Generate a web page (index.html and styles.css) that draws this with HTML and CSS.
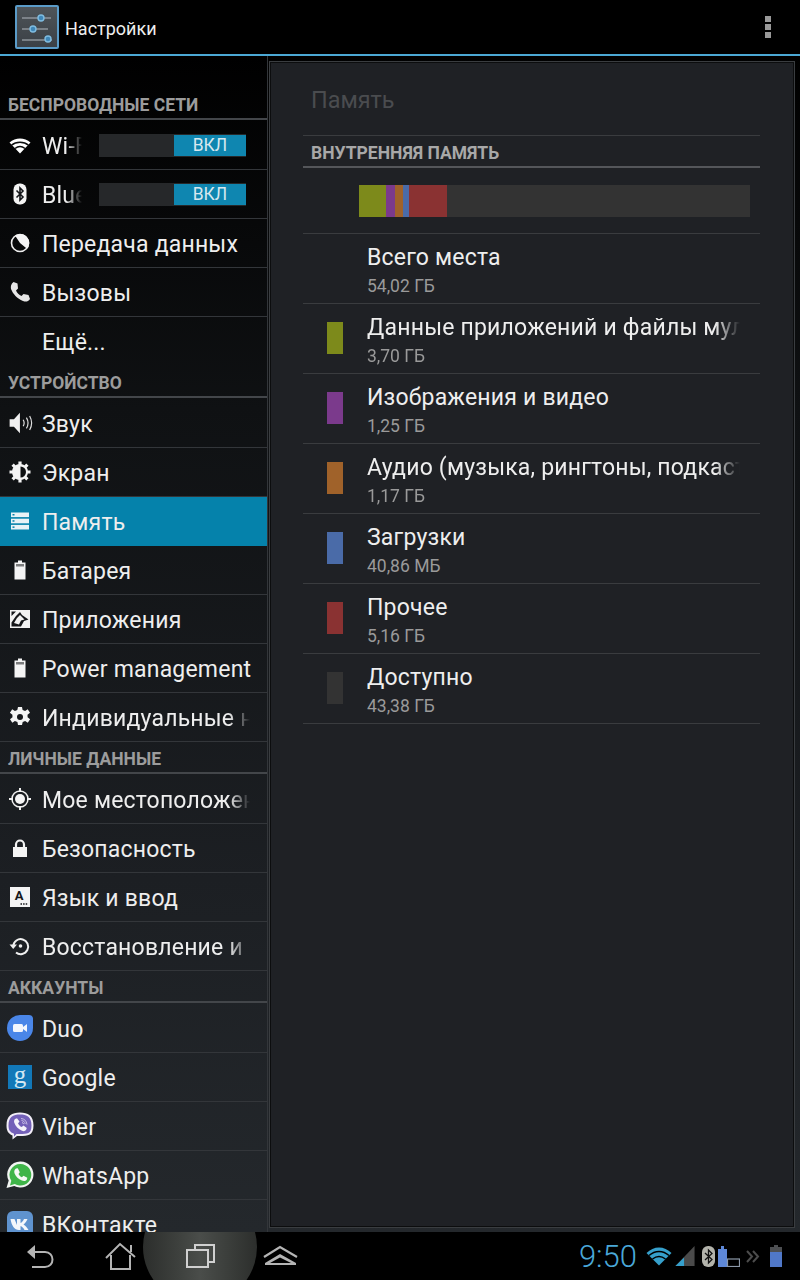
FILE: index.html
```html
<!DOCTYPE html>
<html lang="ru">
<head>
    <meta charset="UTF-8">
    <meta name="viewport" content="width=device-width, initial-scale=1.0">
    <title>Настройки</title>
    <link rel="stylesheet" href="styles.css">
</head>
<body>
<div class="screen">
    <header class="actionbar">
        <div class="app-icon">
            <svg viewBox="0 0 44 44" width="44" height="44">
                <g stroke="#8d949a" stroke-width="1.5" fill="none">
                    <path d="M7 13H36M7 24H33M7 35H37"/>
                </g>
                <g fill="#3f87b8" stroke="#7fbce0" stroke-width="1.4">
                    <circle cx="26" cy="13" r="3"/>
                    <circle cx="18" cy="24" r="3"/>
                    <circle cx="33" cy="34" r="3"/>
                </g>
            </svg>
        </div>
        <span class="actionbar-title">Настройки</span>
        <div class="overflow"><i></i><i></i><i></i></div>
    </header>

    <div class="content">
        <nav class="sidebar">
            <div class="section first">Беспроводные сети</div>
            <div class="row">
                <svg class="icon" viewBox="0 0 24 24"><path fill="#fff" d="M12 20.500 1.500 9.500C7.500 4 16.500 4 22.500 9.500Z"/><path stroke="#0c0d0e" stroke-width="1.500" fill="none" d="M3.500 12.200C8 8.300 16 8.300 20.500 12.200M7 15.500C10 13.200 14 13.200 17 15.500"/></svg>
                <span class="label short">Wi-Fi</span>
                <div class="toggle"><span class="toggle-on">ВКЛ</span></div>
            </div>
            <div class="row">
                <svg class="icon" viewBox="0 0 24 24"><rect x="5.500" y="1.500" width="13" height="21" rx="6" fill="#f4f4f4"/><path stroke="#15171a" stroke-width="1.600" fill="none" d="M8.500 8.500 15 15l-3 3V6l3 3-6.500 6.500"/></svg>
                <span class="label short">Bluetooth</span>
                <div class="toggle"><span class="toggle-on">ВКЛ</span></div>
            </div>
            <div class="row">
                <svg class="icon" viewBox="0 0 24 24"><circle cx="12" cy="12" r="8.500" fill="none" stroke="#eee" stroke-width="1.600"/><path fill="#f4f4f4" d="M12 3a9 9 0 0 1 7 14.800L12 12Z M12 3a9 9 0 0 0-5 1.500L12 12Z"/></svg>
                <span class="label">Передача данных</span>
            </div>
            <div class="row">
                <svg class="icon" viewBox="0 0 24 24"><path fill="#e6e6e6" d="M5.500 2 9.500 3.500 10 8.500 8 10.500C9 13 11 15 13.500 16L15.500 14 20.500 15 22 19C20 22 17.500 22 15 21 9 18.500 5 14 3 9 2.500 6 3 4 5.500 2Z"/></svg>
                <span class="label">Вызовы</span>
            </div>
            <div class="row plain">
                <span class="icon"></span>
                <span class="label">Ещё...</span>
            </div>

            <div class="section">Устройство</div>
            <div class="row">
                <svg class="icon big" viewBox="0 0 24 24"><path fill="#f0f0f0" d="M1.500 8.500H5.500L11 2.500V21.500L5.500 15.500H1.500Z"/><path fill="none" stroke="#ddd" stroke-width="1.100" d="M14 9C15.200 11 15.200 13 14 15M17 7C18.800 10 18.800 14 17 17M20 5.500C22.500 10 22.500 14 20 18.500"/></svg>
                <span class="label">Звук</span>
            </div>
            <div class="row">
                <svg class="icon" viewBox="0 0 24 24"><circle cx="12" cy="12" r="8" fill="#f4f4f4"/><path stroke="#f4f4f4" stroke-width="3.200" d="M12 1.500v21M1.500 12h21M4.600 4.600l14.800 14.800M19.400 4.600 4.600 19.400"/><path fill="#0e1012" d="M12.500 6.500a5.500 5.500 0 0 1 0 11Z"/></svg>
                <span class="label">Экран</span>
            </div>
            <div class="row active">
                <svg class="icon" viewBox="0 0 24 24"><g fill="#e8f2f6"><rect x="3" y="3.500" width="18" height="4.600"/><rect x="3" y="9.700" width="18" height="4.600"/><rect x="3" y="15.900" width="18" height="4.600"/></g><g fill="#0582ab"><rect x="4.500" y="5" width="2" height="1.500"/><rect x="4.500" y="11.200" width="2" height="1.500"/><rect x="4.500" y="17.400" width="2" height="1.500"/></g></svg>
                <span class="label">Память</span>
            </div>
            <div class="row">
                <svg class="icon" viewBox="0 0 24 24"><path fill="#f4f4f4" d="M10 2.500h4v2h3.500v17H6.500v-17H10Z"/><path fill="#15171a" d="M8 6h8v2.500H8z" opacity=".55"/></svg>
                <span class="label">Батарея</span>
            </div>
            <div class="row">
                <svg class="icon" viewBox="0 0 24 24"><rect x="2" y="3" width="20" height="18" fill="#f2f2f2"/><path fill="#15171a" d="M3.500 19.500V15.500L8 9 12 5 14 8 20.500 12.500 16 14 13 19.500ZM3.500 4.500h4.500L3.500 9Z"/><path fill="#f2f2f2" d="M6 16 9 11 12 8 14 10 16.500 12.500 13 13.500 11 17.500Z"/></svg>
                <span class="label">Приложения</span>
            </div>
            <div class="row">
                <svg class="icon" viewBox="0 0 24 24"><path fill="#f4f4f4" d="M10 2.500h4v2h3.500v17H6.500v-17H10Z"/><path fill="#15171a" d="M8 6h8v2.500H8z" opacity=".55"/></svg>
                <span class="label">Power management</span>
            </div>
            <div class="row">
                <svg class="icon" viewBox="0 0 24 24"><path fill="#f4f4f4" d="M10 2h4l.6 3 2.500 1 2.600-1.700 2.300 3.500-2.500 2 .1 2.400 2.500 2-2.300 3.500-2.700-1.700-2.400 1-.7 3H10l-.6-3-2.500-1-2.600 1.700-2.300-3.500 2.500-2-.1-2.400-2.500-2 2.300-3.500 2.700 1.700 2.400-1Z"/><circle cx="12" cy="12" r="3" fill="#15171a"/></svg>
                <span class="label fade">Индивидуальные настройки</span>
            </div>

            <div class="section">Личные данные</div>
            <div class="row">
                <svg class="icon" viewBox="0 0 24 24"><circle cx="12" cy="12" r="8" fill="none" stroke="#f0f0f0" stroke-width="1.500"/><circle cx="12" cy="12" r="5" fill="#f4f4f4"/><path stroke="#f0f0f0" stroke-width="2" d="M12 1v4M12 19v4M1 12h4M19 12h4"/></svg>
                <span class="label fade">Мое местоположение</span>
            </div>
            <div class="row">
                <svg class="icon" viewBox="0 0 24 24"><path fill="#f4f4f4" d="M5 11h14v10H5Z"/><path fill="none" stroke="#f4f4f4" stroke-width="2.200" d="M8 12V8.500a4 4 0 0 1 8 0V12"/></svg>
                <span class="label">Безопасность</span>
            </div>
            <div class="row">
                <svg class="icon" viewBox="0 0 24 24"><rect x="2" y="2" width="20" height="20" fill="#f4f4f4"/><text x="11" y="15" class="key-letter">A</text><path stroke="#15171a" stroke-width="1.400" stroke-dasharray="1.500 1.100" d="M12.500 19h7"/></svg>
                <span class="label">Язык и ввод</span>
            </div>
            <div class="row">
                <svg class="icon" viewBox="0 0 24 24"><path fill="none" stroke="#f0f0f0" stroke-width="2" d="M5.200 12A7.500 7.500 0 1 1 8 18.500"/><path fill="#f0f0f0" d="M1.500 10.500h7.500L5.200 15Z"/><circle cx="12.500" cy="12" r="1.800" fill="#f0f0f0"/></svg>
                <span class="label fade">Восстановление и сброс</span>
            </div>

            <div class="section">Аккаунты</div>
            <div class="row">
                <svg class="icon app" viewBox="0 0 28 28"><path fill="#4a86e8" d="M14 1H23C25.500 1 27 2.500 27 5V14A13 13 0 1 1 14 1Z"/><rect x="7" y="10" width="10" height="8" rx="1.500" fill="#f3f6fd"/><path fill="#f3f6fd" d="M17 13l4-3v8l-4-3Z"/></svg>
                <span class="label">Duo</span>
            </div>
            <div class="row">
                <div class="google-icon">g</div>
                <span class="label">Google</span>
            </div>
            <div class="row">
                <svg class="icon app" viewBox="0 0 28 28"><path fill="#f2eef8" d="M14 .5C22 .5 27.500 3.500 27.500 13.500S22 24 14 24H11L6.500 27.500V23.500C2 21.500.5 18.500.5 13.500.5 3.500 6 .5 14 .5Z"/><path fill="#7360b8" d="M14 2.500C21 2.500 25.500 5 25.500 13.500S21 22 14 22H10.500L8 24.500V21.800C4 20 2.500 18 2.500 13.500 2.500 5 7 2.500 14 2.500Z"/><path fill="#f4f2fa" d="M9 7l2-.8 2.500 3.300-1.500 2c.8 1.600 2 2.800 3.700 3.600l1.800-1.500 3.300 2.500-.8 2c-1 1.200-2.500 1.300-4 .6-3.800-1.800-6.500-4.500-7.700-8-.5-1.500-.2-2.700.7-3.700Z"/><path fill="none" stroke="#d9d2ee" stroke-width=".8" d="M15 6.500c3.500.3 5.500 2.300 6 6M15.500 8.500c2.200.3 3.400 1.500 3.700 3.500M16 10.500c1 .2 1.500.7 1.600 1.600"/></svg>
                <span class="label">Viber</span>
            </div>
            <div class="row">
                <svg class="icon app" viewBox="0 0 28 28"><path fill="#f2f5f2" d="M14.500.5a13 13 0 1 1-6.300 24.400L.5 27l2.200-7.400A13 13 0 0 1 14.500.5Z"/><path fill="#3fb549" d="M14.500 3a10.800 10.800 0 1 1-5.700 20L4 24.400l1.300-4.700A10.800 10.800 0 0 1 14.500 3Z"/><path fill="#f6f9f6" d="M10 7.500l1.800-.2 2 4-1.300 1.700c.8 1.500 1.900 2.500 3.400 3.300l1.600-1.500 3.800 2-.4 1.800c-1.200 1.600-3 1.900-5 1-3.500-1.400-6-3.800-7.300-7-.7-2.200-.3-3.800 1.400-5.100Z"/></svg>
                <span class="label">WhatsApp</span>
            </div>
            <div class="row">
                <svg class="icon app" viewBox="0 0 28 28"><rect x="1" y="1" width="26" height="26" rx="6" fill="#5f93cf"/><path fill="#f4f7fb" d="M4.500 9H8.500L11 15V9H14.500V13C16 12.500 17 11 18 9H21.500C20.500 11.500 19 13.500 17.500 14.500 19.500 15.500 21 17.500 22.500 20H18.500C17.500 18 16 16.500 14.500 16V20H13C8.500 20 5.500 15.500 4.500 9Z"/></svg>
                <span class="label">ВКонтакте</span>
            </div>
        </nav>

        <main class="panel">
            <h1 class="panel-title">Память</h1>
            <div class="panel-section">Внутренняя память</div>
            <div class="usage-wrap">
                <div class="usage-bar">
                    <span class="seg apps" style="width: 27px"></span>
                    <span class="seg images" style="width: 9px"></span>
                    <span class="seg audio" style="width: 8px"></span>
                    <span class="seg downloads" style="width: 6px"></span>
                    <span class="seg other" style="width: 38px"></span>
                </div>
            </div>
            <div class="storage-row">
                <span class="swatch none"></span>
                <div class="storage-text"><div class="storage-name">Всего места</div><div class="storage-size">54,02 ГБ</div></div>
            </div>
            <div class="storage-row">
                <span class="swatch apps"></span>
                <div class="storage-text fade"><div class="storage-name">Данные приложений и файлы мультимедиа</div><div class="storage-size">3,70 ГБ</div></div>
            </div>
            <div class="storage-row">
                <span class="swatch images"></span>
                <div class="storage-text"><div class="storage-name">Изображения и видео</div><div class="storage-size">1,25 ГБ</div></div>
            </div>
            <div class="storage-row">
                <span class="swatch audio"></span>
                <div class="storage-text fade"><div class="storage-name">Аудио (музыка, рингтоны, подкасты)</div><div class="storage-size">1,17 ГБ</div></div>
            </div>
            <div class="storage-row">
                <span class="swatch downloads"></span>
                <div class="storage-text"><div class="storage-name">Загрузки</div><div class="storage-size">40,86 МБ</div></div>
            </div>
            <div class="storage-row">
                <span class="swatch other"></span>
                <div class="storage-text"><div class="storage-name">Прочее</div><div class="storage-size">5,16 ГБ</div></div>
            </div>
            <div class="storage-row">
                <span class="swatch free"></span>
                <div class="storage-text"><div class="storage-name">Доступно</div><div class="storage-size">43,38 ГБ</div></div>
            </div>
        </main>
    </div>

    <footer class="navbar">
        <div class="nav-glow"></div>
        <div class="nav-buttons">
            <svg class="nav-btn" viewBox="0 0 48 48"><path fill="none" stroke="#b4b4b4" stroke-width="2" d="M17 20H29C39 20 39 35 29 35H16"/><path fill="#b4b4b4" d="M19 13V27L11 20Z"/></svg>
            <svg class="nav-btn" viewBox="0 0 48 48"><path fill="none" stroke="#b4b4b4" stroke-width="2" d="M10 26 24 12 39 25M15 23V37H34V23"/><path stroke="#b4b4b4" stroke-width="2" d="M35 13V20"/></svg>
            <svg class="nav-btn" viewBox="0 0 48 48"><path fill="none" stroke="#d0d0d0" stroke-width="2" d="M11 18H32V35H11ZM19 18V13H38V30H32"/></svg>
            <svg class="nav-btn" viewBox="0 0 48 48"><path fill="none" stroke="#b4b4b4" stroke-width="2.200" d="M8 25 24 15 41 25"/><path fill="#b4b4b4" fill-rule="evenodd" d="M9 33H40V31L24 22 9 31ZM14 31 24 25.500 35 31Z"/></svg>
        </div>
        <div class="status">
            <span class="clock">9:50</span>
            <svg class="st wifi" viewBox="0 0 26 20"><path fill="#36a0cc" d="M13 19.500 .5 7C7.500-.5 18.500-.5 25.500 7Z"/><path fill="none" stroke="#000" stroke-width="1.500" d="M3 9.500C9 4 17 4 23 9.500M6.500 13C10.500 9.800 15.500 9.800 19.500 13"/></svg>
            <svg class="st signal" viewBox="0 0 20 22"><path fill="#4a4a4a" d="M20 0V21H0Z"/><path fill="#36a0cc" d="M9 12V21H0Z"/></svg>
            <svg class="st bt" viewBox="0 0 13 21"><rect x="0" y="0" width="13" height="21" rx="6" fill="#b3b3ab"/><path fill="none" stroke="#111" stroke-width="1.300" d="M3 7 10 13.500 6.500 17V4L10 7.500 3 14"/></svg>
            <svg class="st charge" viewBox="0 0 22 21"><path fill="#5e88d8" d="M0 3h3V0h3v3h3v18H0Z"/><rect x="9.500" y="13" width="12" height="7.500" fill="#000" stroke="#8c98a8" stroke-width="1.200"/></svg>
            <svg class="st chevrons" viewBox="0 0 24 21"><path fill="none" stroke="#4c4c4c" stroke-width="2" d="M1 5 6 10.500 1 16M7 5 12 10.500 7 16"/></svg>
            <svg class="st battery" viewBox="0 0 12 22"><path fill="#4d4f52" d="M4 0h4v2h4v7H0V2h4Z"/><path fill="#5078c8" d="M0 7h12v15H0Z"/></svg>
        </div>
    </footer>
</div>
</body>
</html>
```

FILE: styles.css
```css
body {
    font-family: Roboto, "Noto Sans", sans-serif;
    margin: 0;
    padding: 0;
    background-color: #000;
}

.screen {
    width: 800px;
    height: 1280px;
    display: flex;
    flex-direction: column;
    overflow: hidden;
}

/* top bar */
.actionbar {
    height: 54px;
    flex-shrink: 0;
    display: flex;
    align-items: center;
    padding: 0 29px 0 15px;
    background-color: #000;
    border-bottom: 2px solid #4ba8d4;
}

.app-icon {
    width: 44px;
    height: 44px;
    box-sizing: border-box;
    border: 2px solid #5a9bc8;
    border-radius: 2px;
    background: linear-gradient(#4e5459, #3b4046);
    overflow: hidden;
}

.app-icon svg {
    display: block;
    margin: -2px;
}

.actionbar-title {
    margin-left: 6px;
    padding-top: 2px;
    font-size: 18px;
    color: #eee;
}

.overflow {
    margin-left: auto;
    display: flex;
    flex-direction: column;
    gap: 2px;
}

.overflow i {
    display: block;
    width: 6px;
    height: 6px;
    background-color: #999;
}

/* main area */
.content {
    flex: 1;
    min-height: 0;
    display: flex;
    background: linear-gradient(#000, #0f1113 30%, #1c1f23 70%, #24282c);
}

.sidebar {
    width: 267px;
    flex-shrink: 0;
    overflow: hidden;
    border-right: 1px solid #33363a;
}

.section {
    height: 22px;
    padding: 8px 0 0 8px;
    font-size: 17.5px;
    line-height: 18px;
    font-weight: 700;
    color: #9c9c9c;
    text-transform: uppercase;
    border-bottom: 2px solid #43464a;
    margin-bottom: 1px;
}

.section.first {
    padding-top: 40px;
}

.row {
    height: 48px;
    display: flex;
    align-items: center;
    border-bottom: 1px solid #33363a;
    color: #eee;
}

.row.plain {
    border-bottom-color: transparent;
}

.row.active {
    background-color: #0582ab;
    border-bottom-color: #0582ab;
}

.icon {
    width: 24px;
    height: 24px;
    margin-left: 8px;
    margin-right: 10px;
    flex-shrink: 0;
}

.icon.big {
    width: 26px;
    height: 26px;
    margin-right: 8px;
}

.icon.app {
    width: 28px;
    height: 28px;
    margin-left: 6px;
    margin-right: 8px;
}

.key-letter {
    font-size: 13px;
    font-weight: 700;
    fill: #15171a;
    text-anchor: middle;
}

.google-icon {
    width: 24px;
    height: 24px;
    margin-left: 8px;
    margin-right: 10px;
    flex-shrink: 0;
    background-color: #1278b8;
    color: #d4e8f3;
    font-family: "Liberation Serif", serif;
    font-size: 25px;
    line-height: 19px;
    text-align: center;
}

.label {
    flex: 1;
    min-width: 0;
    padding-top: 2px;
    font-size: 23px;
    letter-spacing: 0.2px;
    white-space: nowrap;
    overflow: hidden;
    padding-right: 17px;
}

.label.fade {
    -webkit-mask-image: linear-gradient(to right, #000 calc(100% - 38px), transparent calc(100% - 17px));
    mask-image: linear-gradient(to right, #000 calc(100% - 38px), transparent calc(100% - 17px));
}

.label.short {
    flex: none;
    width: 40px;
    padding-right: 0;
    -webkit-mask-image: linear-gradient(to right, #000 24px, transparent 40px);
    mask-image: linear-gradient(to right, #000 24px, transparent 40px);
}

.toggle {
    margin-left: 17px;
    width: 147px;
    height: 23px;
    display: flex;
    justify-content: flex-end;
    background-color: #26282a;
}

.toggle-on {
    width: 72px;
    height: 21px;
    margin-top: 1px;
    background-color: #0f86b0;
    color: #d8e8ef;
    font-size: 17.5px;
    line-height: 21px;
    text-align: center;
}

/* right panel */
.panel {
    flex: 1;
    margin: 5px 5px 4px 1px;
    padding: 0 34px 0 33px;
    background-color: #1f2125;
    border: 1px solid #3a3d40;
    outline: 1px solid #0c0d0e;
    outline-offset: -2px;
    min-width: 0;
}

.panel-title {
    margin: 0;
    height: 74px;
    box-sizing: border-box;
    padding: 25px 0 0 8px;
    font-size: 23.4px;
    line-height: 26px;
    font-weight: 400;
    color: #4a4c4f;
    border-bottom: 1px solid #3a3c3f;
}

.panel-section {
    height: 22px;
    padding: 8px 0 0 8px;
    font-size: 17.5px;
    line-height: 19px;
    font-weight: 700;
    color: #a8a8a8;
    text-transform: uppercase;
    border-bottom: 2px solid #54565a;
}

.usage-wrap {
    padding: 17px 10px 16px 56px;
    border-bottom: 1px solid #3a3c3f;
}

.usage-bar {
    height: 32px;
    display: flex;
    background-color: #333;
}

.seg {
    display: block;
    height: 100%;
}

.apps { background-color: #7d8a1b; }
.images { background-color: #7b3a8c; }
.audio { background-color: #a0622a; }
.downloads { background-color: #4a6ba8; }
.other { background-color: #8a3232; }
.free { background-color: #333; }
.none { background-color: transparent; }

.storage-row {
    height: 69px;
    display: flex;
    align-items: center;
    border-bottom: 1px solid #3a3c3f;
}

.swatch {
    width: 16px;
    height: 32px;
    margin: 0 24px 2px;
    flex-shrink: 0;
}

.storage-text {
    flex: 1;
    min-width: 0;
    padding-top: 2px;
    padding-right: 20px;
    overflow: hidden;
}

.storage-text.fade {
    -webkit-mask-image: linear-gradient(to right, #000 calc(100% - 45px), transparent calc(100% - 20px));
    mask-image: linear-gradient(to right, #000 calc(100% - 45px), transparent calc(100% - 20px));
}

.storage-name {
    font-size: 23px;
    line-height: 28px;
    letter-spacing: 0.2px;
    color: #eee;
    white-space: nowrap;
}

.storage-size {
    margin-top: 4px;
    font-size: 17.5px;
    line-height: 20px;
    color: #9a9a9a;
}

/* bottom nav */
.navbar {
    height: 48px;
    flex-shrink: 0;
    position: relative;
    display: flex;
    align-items: center;
    background-color: #000;
    overflow: hidden;
}

.nav-glow {
    position: absolute;
    left: 143px;
    top: -42px;
    width: 114px;
    height: 114px;
    border-radius: 50%;
    background: linear-gradient(to right, #2c2e2c, #3d403d 30%, #4a4d4a 50%, #3b3e3b 75%, #2c2e2c);
}

.nav-buttons {
    position: relative;
    margin-left: 16px;
    display: flex;
    gap: 32px;
}

.nav-btn {
    width: 48px;
    height: 48px;
    display: block;
}

.status {
    position: relative;
    margin-left: auto;
    padding-right: 18px;
    display: flex;
    align-items: center;
}

.clock {
    font-size: 31px;
    font-weight: 300;
    color: #4aa8d8;
    margin-right: 9px;
}

.st {
    display: block;
    height: 21px;
}

.wifi { width: 26px; height: 20px; margin-right: 3px; }
.signal { width: 20px; margin-right: 7px; }
.bt { width: 13px; margin-right: 3px; }
.charge { width: 22px; margin-right: 6px; }
.chevrons { width: 24px; }
.battery { width: 12px; height: 22px; }
```
